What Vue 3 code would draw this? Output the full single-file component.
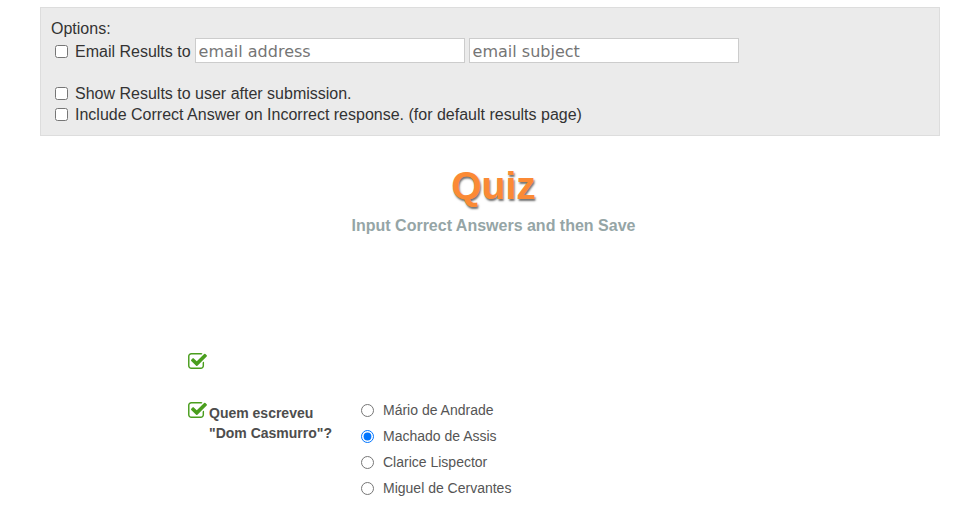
<script setup>
const answers = [
  { label: 'Mário de Andrade', checked: false },
  { label: 'Machado de Assis', checked: true },
  { label: 'Clarice Lispector', checked: false },
  { label: 'Miguel de Cervantes', checked: false },
]
const tickPath = 'M1472 930v318q0 119-84.5 203.5t-203.5 84.5h-832q-119 0-203.5-84.5t-84.5-203.5v-832q0-119 84.5-203.5t203.5-84.5h832q63 0 117 25 15 7 18 23 3 17-9 29l-49 49q-10 10-23 10-3 0-9-2-23-6-45-6h-832q-66 0-113 47t-47 113v832q0 66 47 113t113 47h832q66 0 113-47t47-113v-254q0-13 9-22l64-64q10-10 23-10 6 0 12 3 20 8 20 29zm231-489l-814 814q-24 24-57 24t-57-24l-430-430q-24-24-24-57t24-57l110-110q24-24 57-24t57 24l263 263 647-647q24-24 57-24t57 24l110 110q24 24 24 57t-24 57z'
</script>

<template>
  <div class="page">
    <section class="options">
      <div class="options-title">Options:</div>
      <div class="row email-row">
        <input type="checkbox" class="check" />
        <span>Email Results to</span>
        <input type="text" class="field field-address" placeholder="email address" />
        <input type="text" class="field field-subject" placeholder="email subject" />
      </div>
      <div class="row show-row">
        <input type="checkbox" class="check" />
        <span>Show Results to user after submission.</span>
      </div>
      <div class="row include-row">
        <input type="checkbox" class="check" />
        <span>Include Correct Answer on Incorrect response. (for default results page)</span>
      </div>
    </section>

    <header class="heading">
      <h1>Quiz</h1>
      <h2>Input Correct Answers and then Save</h2>
    </header>

    <div class="quiz">
      <div class="empty-item">
        <svg class="tick" viewBox="64 128 1664 1408" width="19" height="16">
          <path :d="tickPath" fill="#4a9e1e" />
        </svg>
      </div>
      <div class="question">
        <svg class="tick" viewBox="64 128 1664 1408" width="19" height="16">
          <path :d="tickPath" fill="#4a9e1e" />
        </svg>
        <div class="prompt">Quem escreveu<br />"Dom Casmurro"?</div>
        <div class="answers">
          <label v-for="a in answers" :key="a.label" class="answer">
            <input type="radio" name="q1" class="radio" :checked="a.checked" />
            <span>{{ a.label }}</span>
          </label>
        </div>
      </div>
    </div>
  </div>
</template>

<style scoped>
.page {
  width: 955px;
  height: 528px;
  overflow: hidden;
  padding: 7px 15px 0 40px;
  box-sizing: border-box;
  font-family: "Liberation Sans", Arial, sans-serif;
  color: #333;
}
.options {
  box-sizing: border-box;
  width: 900px;
  height: 129px;
  background: #ebebeb;
  border: 1px solid #ddd;
  padding: 10px;
  font-size: 16px;
  line-height: 21px;
}
.row {
  display: flex;
  align-items: center;
  padding-left: 1px;
}
.check {
  margin: 0 7px 0 3px;
  width: 13px;
  height: 13px;
}
.email-row { height: 26px; margin-top: -1px; }
.show-row { margin-top: 19px; }
.field {
  box-sizing: border-box;
  height: 25px;
  align-self: flex-start;
  border: 1px solid #ccc;
  background: #fff;
  padding: 2px 3px 0;
  font-family: "DejaVu Sans", sans-serif;
  font-size: 16px;
  margin-left: 4px;
  outline: none;
}
.field::placeholder { color: #757575; }
.field-address { width: 270px; }
.field-subject { width: 270px; }
.heading { width: 907px; text-align: center; }
.heading h1 {
  margin: 27px 0 0;
  font-size: 39px;
  line-height: 46px;
  font-weight: 700;
  color: #fb8a35;
  text-shadow: 1px 2px 2px rgba(0,0,0,.55);
}
.heading h2 {
  margin: 7px 0 0;
  font-size: 16px;
  line-height: 20px;
  font-weight: 700;
  color: #95a5a6;
}
.quiz { margin-left: 148px; margin-top: 117px; }
.tick { display: block; flex: none; }
.empty-item { height: 49px; }
.question { display: flex; }
.prompt {
  margin-left: 2px;
  margin-top: 1px;
  width: 151px;
  font-size: 14px;
  line-height: 20px;
  font-weight: 700;
  color: #4d4d4d;
}
.answers { display: flex; flex-direction: column; margin-top: -5px; }
.answer {
  display: flex;
  align-items: center;
  height: 26px;
  font-size: 14px;
  color: #555;
}
.radio { margin: 0 9px 0 1px; width: 13px; height: 13px; }
</style>

<style>
html, body { margin: 0; background: #fff; }
</style>
